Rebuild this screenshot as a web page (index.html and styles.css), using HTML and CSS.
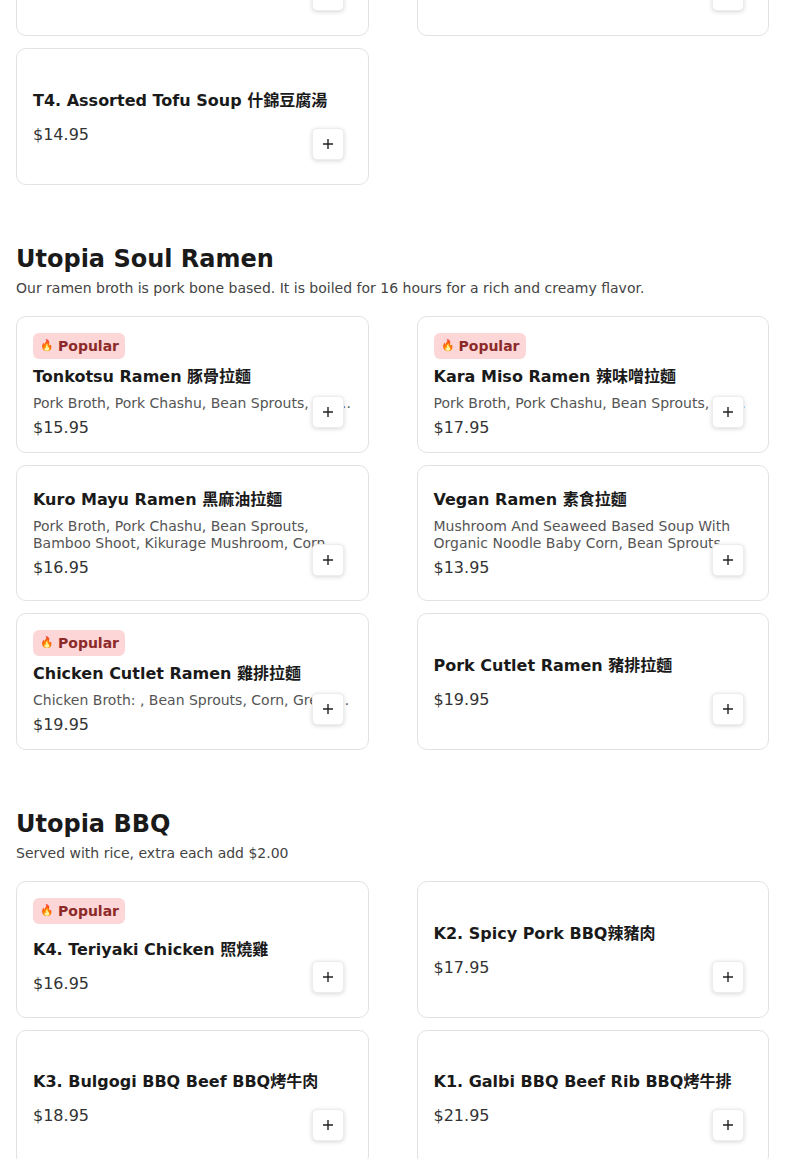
FILE: index.html
```html
<!DOCTYPE html>
<html lang="en">
<head>
<meta charset="utf-8">
<title>Utopia Menu</title>
<link rel="stylesheet" href="styles.css">
</head>
<body>
<main class="menu">
  <section class="section section--cont">
    <div class="grid">
      <article class="card">
        <div class="card-body">
          <h3 class="item-name">T2. Seafood Tofu Soup <span class="cjk" lang="zh-Hant">海鮮豆腐湯</span></h3>
          <p class="item-price">$14.95</p>
        </div>
        <button class="add-btn" aria-label="Add"><svg viewBox="0 0 12 12" width="12" height="12"><path d="M6 1v10M1 6h10" stroke="currentColor" stroke-width="1.4" fill="none"/></svg></button>
      </article>
      <article class="card">
        <div class="card-body">
          <h3 class="item-name">T3. Beef Tofu Soup <span class="cjk" lang="zh-Hant">牛肉豆腐湯</span></h3>
          <p class="item-price">$14.95</p>
        </div>
        <button class="add-btn" aria-label="Add"><svg viewBox="0 0 12 12" width="12" height="12"><path d="M6 1v10M1 6h10" stroke="currentColor" stroke-width="1.4" fill="none"/></svg></button>
      </article>
      <article class="card">
        <div class="card-body">
          <h3 class="item-name">T4. Assorted Tofu Soup <span class="cjk" lang="zh-Hant">什錦豆腐湯</span></h3>
          <p class="item-price">$14.95</p>
        </div>
        <button class="add-btn" aria-label="Add"><svg viewBox="0 0 12 12" width="12" height="12"><path d="M6 1v10M1 6h10" stroke="currentColor" stroke-width="1.4" fill="none"/></svg></button>
      </article>
    </div>
  </section>

  <section class="section">
    <h2 class="section-title">Utopia Soul Ramen</h2>
    <p class="section-desc">Our ramen broth is pork bone based. It is boiled for 16 hours for a rich and creamy flavor.</p>
    <div class="grid">
      <article class="card">
        <span class="badge"><span class="badge-icon">🔥</span>Popular</span>
        <div class="card-body">
          <h3 class="item-name">Tonkotsu Ramen <span class="cjk" lang="zh-Hant">豚骨拉麵</span></h3>
          <p class="item-desc item-desc--one">Pork Broth, Pork Chashu, Bean Sprouts, Corn, Green Onion, Egg</p>
          <p class="item-price">$15.95</p>
        </div>
        <button class="add-btn" aria-label="Add"><svg viewBox="0 0 12 12" width="12" height="12"><path d="M6 1v10M1 6h10" stroke="currentColor" stroke-width="1.4" fill="none"/></svg></button>
      </article>
      <article class="card">
        <span class="badge"><span class="badge-icon">🔥</span>Popular</span>
        <div class="card-body">
          <h3 class="item-name">Kara Miso Ramen <span class="cjk" lang="zh-Hant">辣味噌拉麵</span></h3>
          <p class="item-desc item-desc--one">Pork Broth, Pork Chashu, Bean Sprouts, Bamboo Shoot, Kikurage Mushroom, Green Onion, Egg</p>
          <p class="item-price">$17.95</p>
        </div>
        <button class="add-btn" aria-label="Add"><svg viewBox="0 0 12 12" width="12" height="12"><path d="M6 1v10M1 6h10" stroke="currentColor" stroke-width="1.4" fill="none"/></svg></button>
      </article>
      <article class="card">
        <div class="card-body">
          <h3 class="item-name">Kuro Mayu Ramen <span class="cjk" lang="zh-Hant">黑麻油拉麵</span></h3>
          <p class="item-desc">Pork Broth, Pork Chashu, Bean Sprouts, Bamboo Shoot, Kikurage Mushroom, Corn, Green Onion, Egg</p>
          <p class="item-price">$16.95</p>
        </div>
        <button class="add-btn" aria-label="Add"><svg viewBox="0 0 12 12" width="12" height="12"><path d="M6 1v10M1 6h10" stroke="currentColor" stroke-width="1.4" fill="none"/></svg></button>
      </article>
      <article class="card">
        <div class="card-body">
          <h3 class="item-name">Vegan Ramen <span class="cjk" lang="zh-Hant">素食拉麵</span></h3>
          <p class="item-desc">Mushroom And Seaweed Based Soup With Organic Noodle Baby Corn, Bean Sprouts, Green Onion</p>
          <p class="item-price">$13.95</p>
        </div>
        <button class="add-btn" aria-label="Add"><svg viewBox="0 0 12 12" width="12" height="12"><path d="M6 1v10M1 6h10" stroke="currentColor" stroke-width="1.4" fill="none"/></svg></button>
      </article>
      <article class="card">
        <span class="badge"><span class="badge-icon">🔥</span>Popular</span>
        <div class="card-body">
          <h3 class="item-name">Chicken Cutlet Ramen <span class="cjk" lang="zh-Hant">雞排拉麵</span></h3>
          <p class="item-desc item-desc--one">Chicken Broth: , Bean Sprouts, Corn, Green Onion, Egg</p>
          <p class="item-price">$19.95</p>
        </div>
        <button class="add-btn" aria-label="Add"><svg viewBox="0 0 12 12" width="12" height="12"><path d="M6 1v10M1 6h10" stroke="currentColor" stroke-width="1.4" fill="none"/></svg></button>
      </article>
      <article class="card">
        <div class="card-body">
          <h3 class="item-name">Pork Cutlet Ramen <span class="cjk" lang="zh-Hant">豬排拉麵</span></h3>
          <p class="item-price">$19.95</p>
        </div>
        <button class="add-btn" aria-label="Add"><svg viewBox="0 0 12 12" width="12" height="12"><path d="M6 1v10M1 6h10" stroke="currentColor" stroke-width="1.4" fill="none"/></svg></button>
      </article>
    </div>
  </section>

  <section class="section">
    <h2 class="section-title">Utopia BBQ</h2>
    <p class="section-desc">Served with rice, extra each add $2.00</p>
    <div class="grid">
      <article class="card">
        <span class="badge"><span class="badge-icon">🔥</span>Popular</span>
        <div class="card-body">
          <h3 class="item-name">K4. Teriyaki Chicken <span class="cjk" lang="zh-Hant">照燒雞</span></h3>
          <p class="item-price">$16.95</p>
        </div>
        <button class="add-btn" aria-label="Add"><svg viewBox="0 0 12 12" width="12" height="12"><path d="M6 1v10M1 6h10" stroke="currentColor" stroke-width="1.4" fill="none"/></svg></button>
      </article>
      <article class="card">
        <div class="card-body">
          <h3 class="item-name">K2. Spicy Pork BBQ<span class="cjk" lang="zh-Hant">辣豬肉</span></h3>
          <p class="item-price">$17.95</p>
        </div>
        <button class="add-btn" aria-label="Add"><svg viewBox="0 0 12 12" width="12" height="12"><path d="M6 1v10M1 6h10" stroke="currentColor" stroke-width="1.4" fill="none"/></svg></button>
      </article>
      <article class="card">
        <div class="card-body">
          <h3 class="item-name">K3. Bulgogi BBQ Beef BBQ<span class="cjk" lang="zh-Hant">烤牛肉</span></h3>
          <p class="item-price">$18.95</p>
        </div>
        <button class="add-btn" aria-label="Add"><svg viewBox="0 0 12 12" width="12" height="12"><path d="M6 1v10M1 6h10" stroke="currentColor" stroke-width="1.4" fill="none"/></svg></button>
      </article>
      <article class="card">
        <div class="card-body">
          <h3 class="item-name">K1. Galbi BBQ Beef Rib BBQ<span class="cjk" lang="zh-Hant">烤牛排</span></h3>
          <p class="item-price">$21.95</p>
        </div>
        <button class="add-btn" aria-label="Add"><svg viewBox="0 0 12 12" width="12" height="12"><path d="M6 1v10M1 6h10" stroke="currentColor" stroke-width="1.4" fill="none"/></svg></button>
      </article>
    </div>
  </section>
</main>
</body>
</html>
```

FILE: styles.css
```css
html, body {
  margin: 0;
  padding: 0;
  background: #ffffff;
}

body {
  font-family: "DejaVu Sans", "Noto Sans CJK TC", sans-serif;
  color: #1a1a1a;
}

.menu {
  padding: 0 16px 40px;
}

.section + .section {
  margin-top: 59.5px;
}

.section--cont {
  margin-top: -100.5px;
}

.section-title {
  margin: 0 0 3px;
  font-size: 24px;
  line-height: 31px;
  font-weight: 700;
  color: #1a1a1a;
}

.section-desc {
  margin: 0 0 18px;
  font-size: 14px;
  line-height: 20px;
  color: #444444;
}

.grid {
  display: grid;
  grid-template-columns: 1fr 1fr;
  column-gap: 48px;
  row-gap: 12px;
}

.card {
  position: relative;
  box-sizing: border-box;
  height: 136.5px;
  padding: 16px;
  border: 1px solid #e2e2e2;
  border-radius: 10px;
  background: #ffffff;
  display: flex;
  flex-direction: column;
  overflow: hidden;
}

.badge {
  align-self: flex-start;
  flex-shrink: 0;
  box-sizing: border-box;
  height: 26px;
  margin-bottom: 6px;
  padding: 0 6px 0 7px;
  display: inline-flex;
  align-items: center;
  gap: 4px;
  background: #fdd7d7;
  color: #8c2a2a;
  border-radius: 6px;
  font-size: 14px;
  line-height: 18px;
  font-weight: 700;
}

.badge-icon {
  font-size: 11px;
  line-height: 14px;
}

.card-body {
  flex: 1;
  min-height: 0;
  margin-bottom: -3px;
  display: flex;
  flex-direction: column;
  justify-content: safe center;
}

.card-body > * {
  flex-shrink: 0;
}

.item-name {
  margin: 0 0 6px;
  font-size: 16px;
  line-height: 24px;
  font-weight: 700;
  color: #1a1a1a;
  white-space: nowrap;
}

.cjk {
  line-height: 1;
}

.item-desc {
  margin: 0;
  font-size: 14px;
  line-height: 17px;
  color: #555555;
  overflow: hidden;
  display: -webkit-box;
  -webkit-box-orient: vertical;
  -webkit-line-clamp: 2;
}

.item-desc--one {
  display: block;
  white-space: nowrap;
  text-overflow: ellipsis;
}

.item-price {
  margin: 4px 0 0;
  font-size: 16px;
  line-height: 24px;
  color: #333333;
}

.add-btn {
  position: absolute;
  right: 24px;
  bottom: 24px;
  box-sizing: border-box;
  width: 32px;
  height: 32px;
  padding: 0;
  border: 1px solid #ededed;
  border-radius: 5px;
  background: #ffffff;
  box-shadow: 0 1px 4px rgba(0, 0, 0, 0.16);
  color: #222222;
  display: flex;
  align-items: center;
  justify-content: center;
  cursor: pointer;
}

.add-btn svg {
  display: block;
}
```
